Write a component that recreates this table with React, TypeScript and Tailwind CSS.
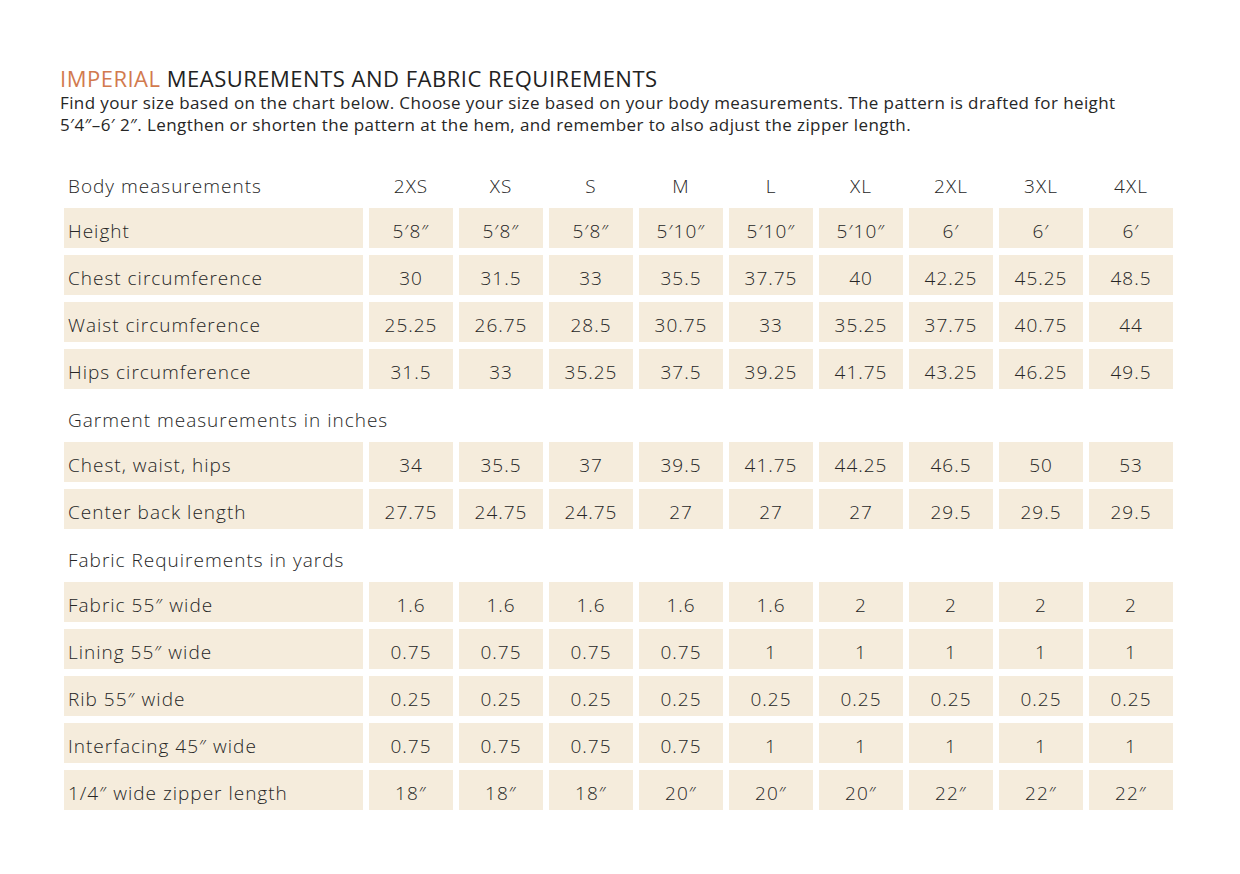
const sizes = ["2XS", "XS", "S", "M", "L", "XL", "2XL", "3XL", "4XL"];

type Row = { label: string; values: string[] };
type Section = { title: string; rows: Row[] };

const sections: Section[] = [
  {
    title: "Body measurements",
    rows: [
      { label: "Height", values: ["5′8″", "5′8″", "5′8″", "5′10″", "5′10″", "5′10″", "6′", "6′", "6′"] },
      { label: "Chest circumference", values: ["30", "31.5", "33", "35.5", "37.75", "40", "42.25", "45.25", "48.5"] },
      { label: "Waist circumference", values: ["25.25", "26.75", "28.5", "30.75", "33", "35.25", "37.75", "40.75", "44"] },
      { label: "Hips circumference", values: ["31.5", "33", "35.25", "37.5", "39.25", "41.75", "43.25", "46.25", "49.5"] },
    ],
  },
  {
    title: "Garment measurements in inches",
    rows: [
      { label: "Chest, waist, hips", values: ["34", "35.5", "37", "39.5", "41.75", "44.25", "46.5", "50", "53"] },
      { label: "Center back length", values: ["27.75", "24.75", "24.75", "27", "27", "27", "29.5", "29.5", "29.5"] },
    ],
  },
  {
    title: "Fabric Requirements in yards",
    rows: [
      { label: "Fabric 55″ wide", values: ["1.6", "1.6", "1.6", "1.6", "1.6", "2", "2", "2", "2"] },
      { label: "Lining 55″ wide", values: ["0.75", "0.75", "0.75", "0.75", "1", "1", "1", "1", "1"] },
      { label: "Rib 55″ wide", values: ["0.25", "0.25", "0.25", "0.25", "0.25", "0.25", "0.25", "0.25", "0.25"] },
      { label: "Interfacing 45″ wide", values: ["0.75", "0.75", "0.75", "0.75", "1", "1", "1", "1", "1"] },
      { label: "1/4″ wide zipper length", values: ["18″", "18″", "18″", "20″", "20″", "20″", "22″", "22″", "22″"] },
    ],
  },
];

const grid = "grid grid-cols-[299px_repeat(9,84px)] gap-x-[6px]";

export default function App() {
  return (
    <div
      className="min-h-screen bg-white text-[#262626] px-[60px] pt-[64px]"
      style={{ fontFamily: "'Open Sans', 'Noto Sans', sans-serif" }}
    >
      <h1 className="text-[22px] leading-[28px] tracking-[0.5px] text-[#222222]">
        <span className="text-[#d27a4e]">IMPERIAL</span> MEASUREMENTS AND FABRIC REQUIREMENTS
      </h1>
      <p className="text-[17px] leading-[22px] tracking-[0.4px] whitespace-nowrap">
        Find your size based on the chart below. Choose your size based on your body measurements. The pattern is drafted for height
        <br />
        5′4″–6′ 2″. Lengthen or shorten the pattern at the hem, and remember to also adjust the zipper length.
      </p>

      <div className="ml-[4px] mt-[19px] w-[1110px] text-[19px] tracking-[1px] font-light">
        {sections.map((section, si) => (
          <div key={section.title}>
            <div className={`${grid} h-[53px] pt-[10px] items-center`}>
              <div className="pl-[4px] whitespace-nowrap">{section.title}</div>
              {si === 0 &&
                sizes.map((s) => (
                  <div key={s} className="text-center">
                    {s}
                  </div>
                ))}
            </div>
            <div className="flex flex-col gap-y-[7px]">
              {section.rows.map((row) => (
                <div key={row.label} className={`${grid} h-[40px]`}>
                  <div className="bg-[#f5ecdc] flex items-center pl-[4px] pt-[7px]">{row.label}</div>
                  {row.values.map((v, i) => (
                    <div key={i} className="bg-[#f5ecdc] flex items-center justify-center pt-[7px]">
                      {v}
                    </div>
                  ))}
                </div>
              ))}
            </div>
          </div>
        ))}
      </div>
    </div>
  );
}
